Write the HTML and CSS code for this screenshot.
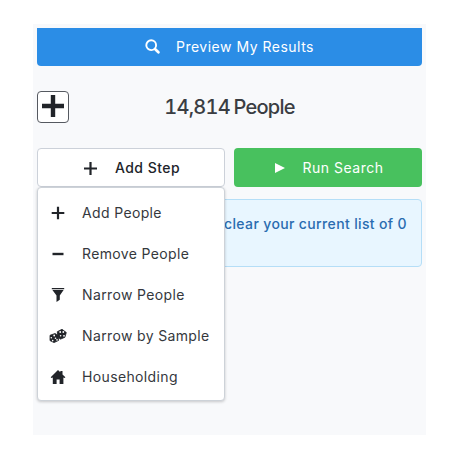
FILE: index.html
```html
<!DOCTYPE html>
<html lang="en">
  <head>
    <meta charset="UTF-8" />
    <meta name="viewport" content="width=device-width, initial-scale=1.0" />
    <title>People Search</title>
    <link rel="stylesheet" href="styles.css">
  </head>
  <body>
    <div class="panel">
      <button class="btn preview">
        <svg class="search-icon" width="15" height="15" viewBox="0 0 15 15">
          <circle cx="6.2" cy="6.2" r="4.9" fill="none" stroke="#fff" stroke-width="1.9" />
          <path d="M10 10l3.4 3.2" stroke="#fff" stroke-width="2.7" stroke-linecap="round" />
        </svg>
        <span>Preview My Results</span>
      </button>

      <div class="summary">
        <button class="expand">
          <svg width="22" height="22" viewBox="0 0 22 22">
            <path d="M11 0v22M0 11h22" stroke="#212429" stroke-width="4.4" />
          </svg>
        </button>
        <h2>14,814 People</h2>
      </div>

      <div class="actions">
        <div class="dropdown">
          <button class="btn add">
            <svg class="add-icon" width="13" height="13" viewBox="0 0 13 13">
              <path d="M6.5 0v13M0 6.5h13" stroke="#212429" stroke-width="2.2" />
            </svg>
            <span>Add Step</span>
          </button>
          <ul class="menu">
            <li>
              <svg width="18" height="14" viewBox="0 0 18 14">
                <path d="M9 .7v12.6M2.7 7h12.6" stroke="#212429" stroke-width="2.2" />
              </svg>
              <span>Add People</span>
            </li>
            <li>
              <svg width="18" height="14" viewBox="0 0 18 14">
                <path d="M3.5 7h11" stroke="#212429" stroke-width="2.4" />
              </svg>
              <span>Remove People</span>
            </li>
            <li>
              <svg width="18" height="14" viewBox="0 0 18 14">
                <path d="M2.8 0h12.4v1.2H2.8zM3.4 1.9h11.2L10.8 7.6v4.2L7.5 14V7.6z" fill="#212429" />
              </svg>
              <span>Narrow People</span>
            </li>
            <li>
              <svg width="18" height="14" viewBox="0 0 18 14">
                <path d="M8.3 2.7L13 .3l4.3 3.2-1.4 4.8-4.6 1.9-2.6-3z" fill="#212429" stroke="#212429" stroke-width=".8" stroke-linejoin="round" />
                <path d="M1 6.3l5-1.8 3.6 2.2v4.7L5 13.6l-4-2z" fill="#212429" stroke="#212429" stroke-width=".8" stroke-linejoin="round" />
                <g fill="#fff">
                  <circle cx="5.2" cy="6.5" r=".9" />
                  <circle cx="2.3" cy="8.7" r=".8" />
                  <circle cx="3.7" cy="11.6" r=".8" />
                  <circle cx="6.5" cy="9.3" r=".8" />
                  <circle cx="8" cy="10.9" r=".8" />
                  <circle cx="11.2" cy="3" r=".9" />
                  <circle cx="14.3" cy="3" r=".9" />
                  <circle cx="11.6" cy="6.8" r=".8" />
                  <circle cx="15" cy="6.8" r=".9" />
                </g>
              </svg>
              <span>Narrow by Sample</span>
            </li>
            <li>
              <svg width="18" height="14" viewBox="0 0 18 14">
                <path d="M9 0l2.3 2.2V1h2.2v3.4L16.4 7.2l-.8.9-1.2-.6V14H10.6V9.6H7.6V14H3.8V7.5L2.5 8.1l-.8-.9z" fill="#212429" />
              </svg>
              <span>Householding</span>
            </li>
          </ul>
        </div>
        <button class="btn run">
          <svg class="run-icon" width="10" height="10" viewBox="0 0 10 10">
            <path d="M0 0l10 5-10 5z" fill="#fff" />
          </svg>
          <span>Run Search</span>
        </button>
      </div>

      <div class="notice">clear your current list of 0</div>
    </div>
  </body>
</html>
```
FILE: styles.css
```css
* {
  box-sizing: border-box;
}
body {
  margin: 0;
  background: #fff;
  font-family: Inter, "Liberation Sans", sans-serif;
  font-size: 14px;
  color: #212429;
}
button {
  font: inherit;
  color: inherit;
  padding: 0;
}
.panel {
  width: 393px;
  height: 411px;
  margin: 24px 0 0 33px;
  padding: 4px;
  background: #f8f9fb;
}
.btn {
  display: flex;
  align-items: center;
  justify-content: center;
  width: 100%;
  height: 39px;
  border: 0;
  border-radius: 4px;
  letter-spacing: 0.5px;
}
.btn span {
  margin-top: -1px;
}
.preview {
  height: 38px;
  border-radius: 0 0 4px 4px;
  background: #2b8de6;
  color: #fff;
}
.search-icon {
  margin: -1px 16px 0 0;
}
.summary {
  display: flex;
  align-items: center;
  height: 32px;
  margin: 25px 0;
}
.expand {
  display: flex;
  align-items: center;
  justify-content: center;
  width: 32px;
  height: 32px;
  border: 1px solid #555960;
  border-radius: 4px;
  background: #fff;
}
.expand svg {
  margin-top: -2px;
}
.summary h2 {
  flex: 1;
  margin: 0;
  padding-right: 32px;
  font-size: 20px;
  font-weight: 500;
  font-variant-numeric: tabular-nums;
  letter-spacing: -0.75px;
  word-spacing: -1px;
  text-align: center;
  color: #3a3d42;
}
.actions {
  display: grid;
  grid-template-columns: 188px 188px;
  gap: 9px;
}
.dropdown {
  position: relative;
}
.add {
  padding-left: 2px;
  border: 1px solid #ccd1d9;
  background: #fff;
  font-weight: 500;
  letter-spacing: 0.45px;
}
.add-icon {
  margin: 2px 18px 0 0;
}
.run {
  padding-left: 2px;
  background: #48c15e;
  color: #fff;
}
.run-icon {
  margin-right: 18px;
}
.menu {
  position: absolute;
  top: 39px;
  left: 0;
  z-index: 1;
  width: 188px;
  height: 214px;
  margin: 0;
  padding: 5px 11px;
  list-style: none;
  border: 1px solid #cdd2d8;
  border-radius: 4px;
  background: #fff;
  box-shadow: 0 1px 3px rgba(0, 0, 0, 0.2);
}
.menu li {
  display: flex;
  align-items: center;
  gap: 15px;
  height: 41px;
  letter-spacing: 0.36px;
  white-space: nowrap;
  color: #35383d;
}
.menu svg {
  margin-top: -1px;
}
.menu span {
  margin-top: -2px;
}
.notice {
  height: 68px;
  margin-top: 12px;
  padding: 14px 14px 14px 15px;
  border: 1px solid #b5def7;
  border-radius: 4px;
  background: #e8f6ff;
  color: #2a6cb0;
  font-weight: 500;
  line-height: 20px;
  letter-spacing: 0.36px;
  text-align: right;
}
```
